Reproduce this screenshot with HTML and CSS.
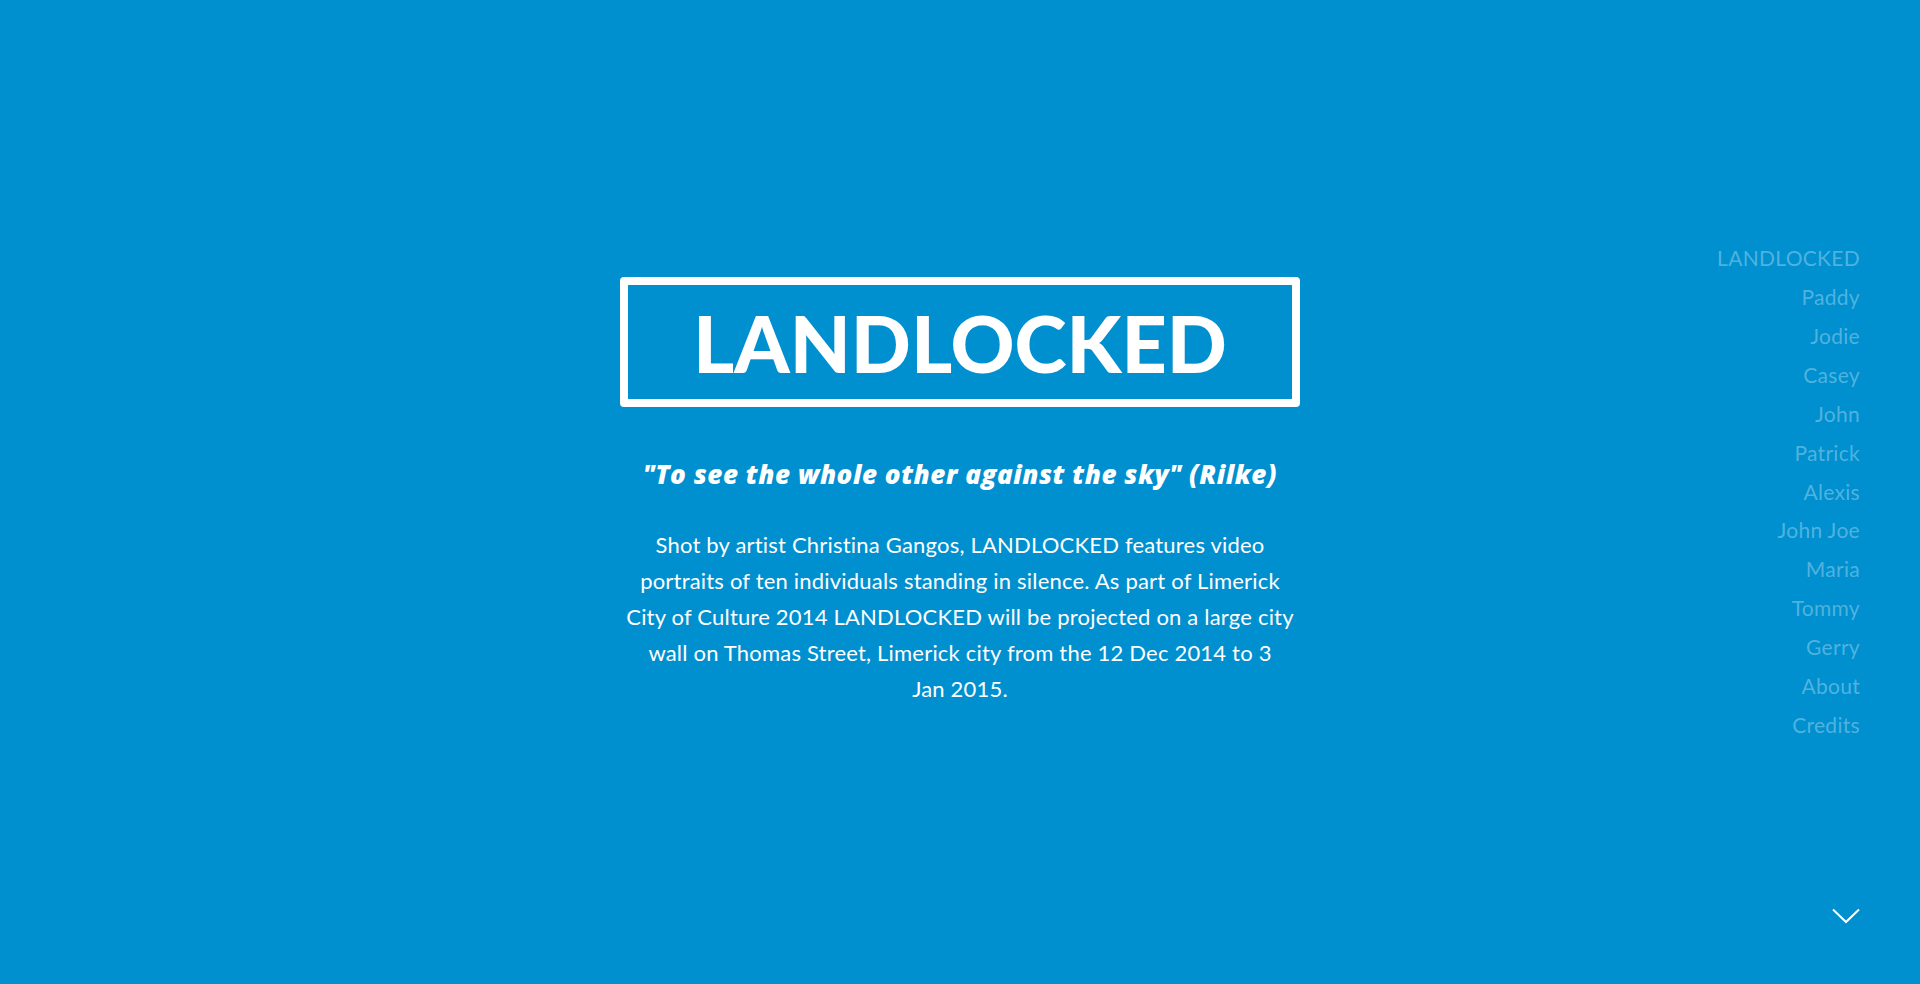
FILE: index.html
```html
<!DOCTYPE html>
<html lang="en">
<head>
<meta charset="utf-8">
<title>LANDLOCKED</title>
<link rel="stylesheet" href="styles.css">
</head>
<body>
<div class="page">
  <div class="spacer"></div>
  <main class="intro">
    <h1 class="title-box"><span class="title">LANDLOCKED</span></h1>
    <p class="quote">"To see the whole other against the sky" (Rilke)</p>
    <p class="desc">Shot by artist Christina Gangos, LANDLOCKED features video portraits of ten individuals standing in silence. As part of Limerick City of Culture 2014 LANDLOCKED will be projected on a large city wall on Thomas Street, Limerick city from the 12 Dec 2014 to 3 Jan&nbsp;2015.</p>
  </main>
  <nav class="side-nav">
    <a href="#">LANDLOCKED</a>
    <a href="#">Paddy</a>
    <a href="#">Jodie</a>
    <a href="#">Casey</a>
    <a href="#">John</a>
    <a href="#">Patrick</a>
    <a href="#">Alexis</a>
    <a href="#">John Joe</a>
    <a href="#">Maria</a>
    <a href="#">Tommy</a>
    <a href="#">Gerry</a>
    <a href="#">About</a>
    <a href="#">Credits</a>
  </nav>
  <a class="scroll-down" href="#" aria-label="Scroll down">
    <svg width="28" height="16" viewBox="0 0 28 16"><path d="M1 1.5 L14 14 L27 1.5" fill="none" stroke="#fff" stroke-width="2"/></svg>
  </a>
</div>
</body>
</html>
```

FILE: styles.css
```css
html, body {
  margin: 0;
  padding: 0;
  height: 100%;
}
body {
  background: #0090d0;
  color: #fff;
  font-family: Lato, "Open Sans", sans-serif;
  overflow: hidden;
}
.page {
  position: relative;
  height: 984px;
  display: grid;
  grid-template-columns: 1fr 680px 1fr;
  align-items: center;
}
.intro {
  text-align: center;
}
.title-box {
  margin: 0;
  height: 130px;
  box-sizing: border-box;
  border: 8px solid #fff;
  border-radius: 4px;
  display: flex;
  align-items: center;
  justify-content: center;
}
.title {
  font-family: Lato, sans-serif;
  font-weight: 900;
  font-size: 79px;
  line-height: 1;
}
.quote {
  margin: 49px 0 0;
  font-family: "Open Sans", sans-serif;
  font-weight: 800;
  font-style: italic;
  font-size: 26px;
  letter-spacing: 0.55px;
  line-height: 36px;
}
.desc {
  margin: 35px 0 0;
  font-size: 22px;
  letter-spacing: 0.2px;
  line-height: 36px;
}
.side-nav {
  justify-self: end;
  padding-right: 60px;
  display: flex;
  flex-direction: column;
  align-items: flex-end;
}
.side-nav a {
  color: rgba(255, 255, 255, 0.32);
  text-decoration: none;
  font-size: 21px;
  letter-spacing: 0.3px;
  line-height: 38.9px;
}
.scroll-down {
  position: absolute;
  right: 60px;
  bottom: 60px;
  display: block;
  line-height: 0;
}
```
